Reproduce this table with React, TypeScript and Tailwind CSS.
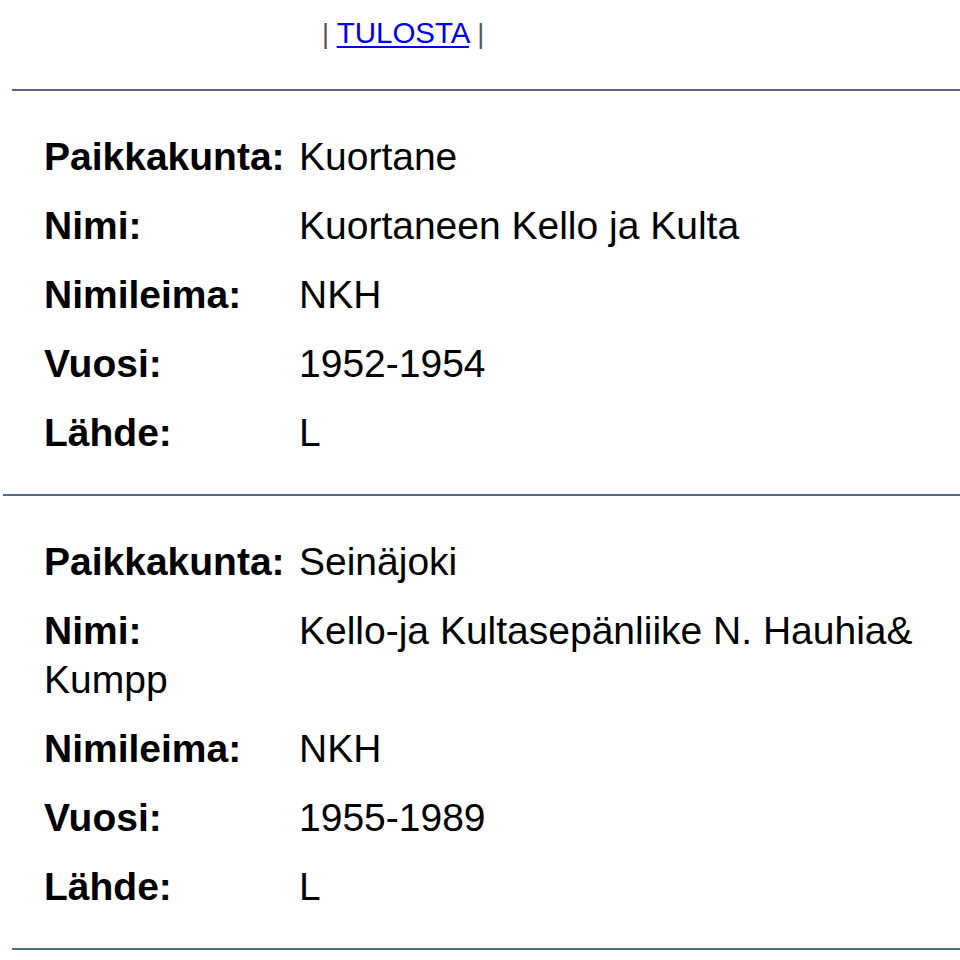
import React from 'react';

interface Entry {
  paikkakunta: string;
  nimi: string;
  nimileima: string;
  vuosi: string;
  lahde: string;
}

const entries: Entry[] = [
  {
    paikkakunta: 'Kuortane',
    nimi: 'Kuortaneen Kello ja Kulta',
    nimileima: 'NKH',
    vuosi: '1952-1954',
    lahde: 'L',
  },
  {
    paikkakunta: 'Seinäjoki',
    nimi: 'Kello-ja Kultasepänliike N. Hauhia& Kumpp',
    nimileima: 'NKH',
    vuosi: '1955-1989',
    lahde: 'L',
  },
];

function Row({ label, value }: { label: string; value: string }) {
  return (
    <div className="leading-[49px]">
      <b className="inline-block w-[255px] font-bold">{label}</b>
      <span>{value}</span>
    </div>
  );
}

function Rule({ offset }: { offset: string }) {
  return <div className={`h-[2px] bg-[#536987] ${offset}`} />;
}

export default function App() {
  return (
    <div className="w-[960px] min-h-[960px] bg-white text-black font-['Liberation_Sans',Arial,sans-serif]">
      {/* Print link */}
      <div className="pt-[16px] pl-[322px] leading-[34px] text-[29.5px]">
        <span className="text-[27px] text-[#555]">|</span>{' '}
        <a href="#" className="text-[#0000ee] underline underline-offset-[3px] decoration-[2px]">
          TULOSTA
        </a>{' '}
        <span className="text-[27px] text-[#555]">|</span>
      </div>

      <div className="mt-[38px]">
        {entries.map((e, i) => (
          <div key={i}>
            <Rule offset={i === 0 ? 'ml-[12px]' : 'ml-[3px]'} />
            <div className="pl-[44px] pr-[4px] pt-[41px] pb-[37px] text-[39px] flex flex-col gap-[20px]">
              <Row label="Paikkakunta:" value={e.paikkakunta} />
              <Row label="Nimi:" value={e.nimi} />
              <Row label="Nimileima:" value={e.nimileima} />
              <Row label="Vuosi:" value={e.vuosi} />
              <Row label="Lähde:" value={e.lahde} />
            </div>
          </div>
        ))}
        <Rule offset="ml-[12px]" />
      </div>
    </div>
  );
}
